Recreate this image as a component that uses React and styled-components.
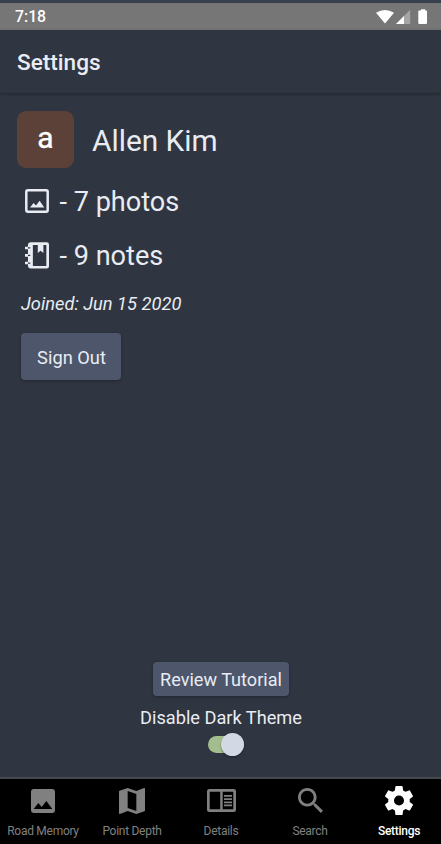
import React from "react";
import styled, { createGlobalStyle } from "styled-components";

const Global = createGlobalStyle`
  * { box-sizing: border-box; }
  body { margin: 0; background: #2f3541; font-family: Roboto, "Liberation Sans", sans-serif; }
`;

const Screen = styled.div`
  width: 441px;
  height: 844px;
  display: flex;
  flex-direction: column;
  overflow: hidden;
  background: #2f3541;
  color: #e9ecf2;
`;

const StatusBar = styled.div`
  height: 30px;
  flex: none;
  border-top: 3px solid #36404f;
  background: #767676;
  display: flex;
  align-items: center;
  justify-content: space-between;
  padding: 0 14px 0 15px;
  color: #fff;
`;

const Clock = styled.span`
  font-size: 15.8px;
  line-height: 27px;
  font-weight: 500;
`;

const StatusIcons = styled.div`
  display: flex;
  svg { display: block; }
`;

const Header = styled.header`
  height: 63px;
  flex: none;
  padding: 0 17px;
  background: #2f3541;
  box-shadow: 0 1px 3px rgba(0, 0, 0, 0.3);
`;

const Title = styled.h1`
  margin: 0;
  font-size: 22.6px;
  line-height: 66px;
  font-weight: 500;
`;

const Content = styled.main`
  flex: 1;
  display: flex;
  flex-direction: column;
  align-items: flex-start;
  padding-top: 18px;
`;

const Profile = styled.div`
  display: flex;
  height: 57px;
  margin-left: 17px;
  gap: 18px;
`;

const Avatar = styled.div`
  width: 57px;
  height: 57px;
  border-radius: 9px;
  background: #5c4138;
  color: #fff;
  font-size: 30px;
  line-height: 54px;
  text-align: center;
  -webkit-text-stroke: 0.4px #fff;
`;

const Name = styled.div`
  font-size: 29.8px;
  line-height: 60px;
`;

const Stat = styled.div`
  display: flex;
  align-items: center;
  height: 54px;
  margin-left: 25px;
  gap: 10px;
  font-size: 27.1px;
  svg { display: block; flex: none; }
`;

const StatText = styled.span`
  padding-top: 2px;
  padding-left: 0.5px;
`;

const Stats = styled.div`
  margin-top: 6px;
`;

const Joined = styled.div`
  margin: 10px 0 0 21px;
  font-size: 18.3px;
  line-height: 24px;
  font-style: italic;
`;

const Button = styled.button`
  border: 0;
  padding: 0 0 0 1px;
  width: ${(p) => p.$width}px;
  height: ${(p) => p.$height}px;
  border-radius: 4px;
  background: #4d566b;
  color: #e9ecf2;
  font-family: inherit;
  font-size: 18.1px;
  box-shadow: 0 1px 3px rgba(0, 0, 0, 0.28);
`;

const SignOut = styled(Button)`
  margin: 17px 0 0 21px;
  padding-top: 2px;
  font-size: 18.3px;
`;

const Preferences = styled.div`
  margin-top: auto;
  width: 100%;
  display: flex;
  flex-direction: column;
  align-items: center;
  padding-bottom: 24px;
`;

const ThemeLabel = styled.div`
  margin-top: 10px;
  padding-left: 1px;
  font-size: 18.2px;
  line-height: 24px;
`;

const Track = styled.div`
  width: 36px;
  height: 17px;
  margin: 6px 0 0 11px;
  border-radius: 9px;
  background: #a3be8c;
  display: flex;
  align-items: center;
  justify-content: flex-end;
`;

const Thumb = styled.div`
  flex: none;
  width: 23px;
  height: 23px;
  border-radius: 50%;
  background: #d3d9e4;
  box-shadow: 0 1px 2px rgba(0, 0, 0, 0.4);
`;

const TabBar = styled.nav`
  height: 67px;
  flex: none;
  border-top: 2px solid #47484d;
  background: #000;
  padding-left: 1px;
  display: grid;
  grid-template-columns: repeat(5, 89px);
  justify-content: center;
`;

const Tab = styled.div`
  display: flex;
  flex-direction: column;
  align-items: center;
  color: ${(p) => (p.$active ? "#fff" : "#808080")};
  font-size: 12px;
  letter-spacing: -0.28px;
  font-weight: ${(p) => (p.$active ? 500 : 400)};
  white-space: nowrap;
  svg { display: block; }
`;

const TabIcon = styled.div`
  height: 43px;
  display: flex;
  align-items: center;
`;

const TabText = styled.span`
  line-height: 18px;
`;

const tabs = [
  {
    label: "Road Memory", w: 24, h: 24, box: "3 3 18 18",
    d: "M21 19V5c0-1.1-.9-2-2-2H5c-1.1 0-2 .9-2 2v14c0 1.1.9 2 2 2h14c1.1 0 2-.9 2-2zM8.5 13.5l2.5 3.01L14.5 12l4.5 6H5l3.5-4.5z",
  },
  {
    label: "Point Depth", w: 26, h: 26, box: "3 3 18 18",
    d: "M20.5 3l-.16.03L15 5.1 9 3 3.36 4.9c-.21.07-.36.25-.36.48V20.5c0 .28.22.5.5.5l.16-.03L9 18.9l6 2.1 5.64-1.9c.21-.07.36-.25.36-.48V3.5c0-.28-.22-.5-.5-.5zM15 19l-6-2.11V5l6 2.11V19z",
  },
  {
    label: "Details", w: 29, h: 23, box: "0 0 29 23",
    d: "M2.5 0h24A2.5 2.5 0 0 1 29 2.5v18a2.5 2.5 0 0 1-2.5 2.5h-24A2.5 2.5 0 0 1 0 20.5v-18A2.5 2.5 0 0 1 2.5 0zM2.7 2.7v17.6h10.5V2.7zM15.7 2.7v17.6h10.6V2.7zM17 6h8v1.8h-8zM17 9.2h8V11h-8zM17 12.4h8v1.8h-8zM17 15.6h8v1.6h-8z",
  },
  {
    label: "Search", w: 25, h: 25, box: "3 3 17.49 17.49",
    d: "M15.5 14h-.79l-.28-.27C15.41 12.59 16 11.11 16 9.5 16 5.91 13.09 3 9.5 3S3 5.91 3 9.5 5.91 16 9.5 16c1.61 0 3.09-.59 4.23-1.57l.27.28v.79l5 4.99L20.49 19l-4.99-5zm-6 0C7.01 14 5 11.99 5 9.5S7.01 5 9.5 5 14 7.01 14 9.5 11.99 14 9.5 14z",
  },
  {
    label: "Settings", w: 28, h: 29, box: "2.25 2 19.5 20", active: true,
    d: "M12,15.5A3.5,3.5 0 0,1 8.5,12A3.5,3.5 0 0,1 12,8.5A3.5,3.5 0 0,1 15.5,12A3.5,3.5 0 0,1 12,15.5M19.43,12.97C19.47,12.65 19.5,12.33 19.5,12C19.5,11.67 19.47,11.34 19.43,11L21.54,9.37C21.73,9.22 21.78,8.95 21.66,8.73L19.66,5.27C19.54,5.05 19.27,4.96 19.05,5.05L16.56,6.05C16.04,5.66 15.5,5.32 14.87,5.07L14.5,2.42C14.46,2.18 14.25,2 14,2H10C9.75,2 9.54,2.18 9.5,2.42L9.13,5.07C8.5,5.32 7.96,5.66 7.44,6.05L4.95,5.05C4.73,4.96 4.46,5.05 4.34,5.27L2.34,8.73C2.21,8.95 2.27,9.22 2.46,9.37L4.57,11C4.53,11.34 4.5,11.67 4.5,12C4.5,12.33 4.53,12.65 4.57,12.97L2.46,14.63C2.27,14.78 2.21,15.05 2.34,15.27L4.34,18.73C4.46,18.95 4.73,19.03 4.95,18.95L7.44,17.94C7.96,18.34 8.5,18.68 9.13,18.93L9.5,21.58C9.54,21.82 9.75,22 10,22H14C14.25,22 14.46,21.82 14.5,21.58L14.87,18.93C15.5,18.67 16.04,18.34 16.56,17.94L19.05,18.95C19.27,19.03 19.54,18.95 19.66,18.73L21.66,15.27C21.78,15.05 21.73,14.78 21.54,14.63L19.43,12.97Z",
  },
];

const PhotoIcon = () => (
  <svg width="24" height="24" viewBox="0 0 24 24" fill="none">
    <rect x="1.3" y="1.3" width="21.4" height="21.4" rx="1.6" stroke="currentColor" strokeWidth="2.5" />
    <path d="M5 18.5l3.6-4.6 2.4 2.7 3.6-4.8 4.7 6.7z" fill="currentColor" />
  </svg>
);

const NotebookIcon = () => (
  <svg width="24" height="27" viewBox="0 0 24.4 27" fill="currentColor" fillRule="evenodd">
    <path d="M5.5 0H22a2.4 2.4 0 0 1 2.4 2.4v22A2.4 2.4 0 0 1 22 26.8H5.5A2.6 2.6 0 0 1 3 24.3V2.5A2.6 2.6 0 0 1 5.5 0zM8 2.7v21.4h13.7V2.7h-3V11l-2.9-2.3L13 11V2.7z" />
    <path d="M0 4.5h4v2.6H0zM0 12.1h4v2.6H0zM0 19.9h4v2.6H0z" />
    <path d="M3 5.2h2.4v1.3H3zM3 12.8h2.4v1.3H3zM3 20.6h2.4v1.3H3z" fill="#2f3541" />
  </svg>
);

export default function App() {
  return (
    <>
      <Global />
      <Screen>
        <StatusBar>
          <Clock>7:18</Clock>
          <StatusIcons>
            <svg width="51" height="16" viewBox="0 0 51 16" fill="currentColor">
              <path d="M0 3.8Q9 -1.8 18 3.8L9 14.5z" />
              <path d="M34.2.8V15H20z" opacity=".35" />
              <path d="M28 7v8h-8z" />
              <path d="M45 .2h4.2v1.4h1.1q.7 0 .7.7V14q0 1-1 1h-6.7q-1 0-1-1V2.3q0-.7.7-.7H45z" />
            </svg>
          </StatusIcons>
        </StatusBar>
        <Header><Title>Settings</Title></Header>
        <Content>
          <Profile>
            <Avatar>a</Avatar>
            <Name>Allen Kim</Name>
          </Profile>
          <Stats>
            <Stat><PhotoIcon /><StatText>- 7 photos</StatText></Stat>
            <Stat><NotebookIcon /><StatText>- 9 notes</StatText></Stat>
          </Stats>
          <Joined>Joined: Jun 15 2020</Joined>
          <SignOut $width={100} $height={47}>Sign Out</SignOut>
          <Preferences>
            <Button $width={136} $height={34}>Review Tutorial</Button>
            <ThemeLabel>Disable Dark Theme</ThemeLabel>
            <Track><Thumb /></Track>
          </Preferences>
        </Content>
        <TabBar>
          {tabs.map((t) => (
            <Tab key={t.label} $active={t.active}>
              <TabIcon>
                <svg width={t.w} height={t.h} viewBox={t.box} preserveAspectRatio="none" fill="currentColor" fillRule={t.label === "Details" ? "evenodd" : "nonzero"}>
                  <path d={t.d} />
                </svg>
              </TabIcon>
              <TabText>{t.label}</TabText>
            </Tab>
          ))}
        </TabBar>
      </Screen>
    </>
  );
}
